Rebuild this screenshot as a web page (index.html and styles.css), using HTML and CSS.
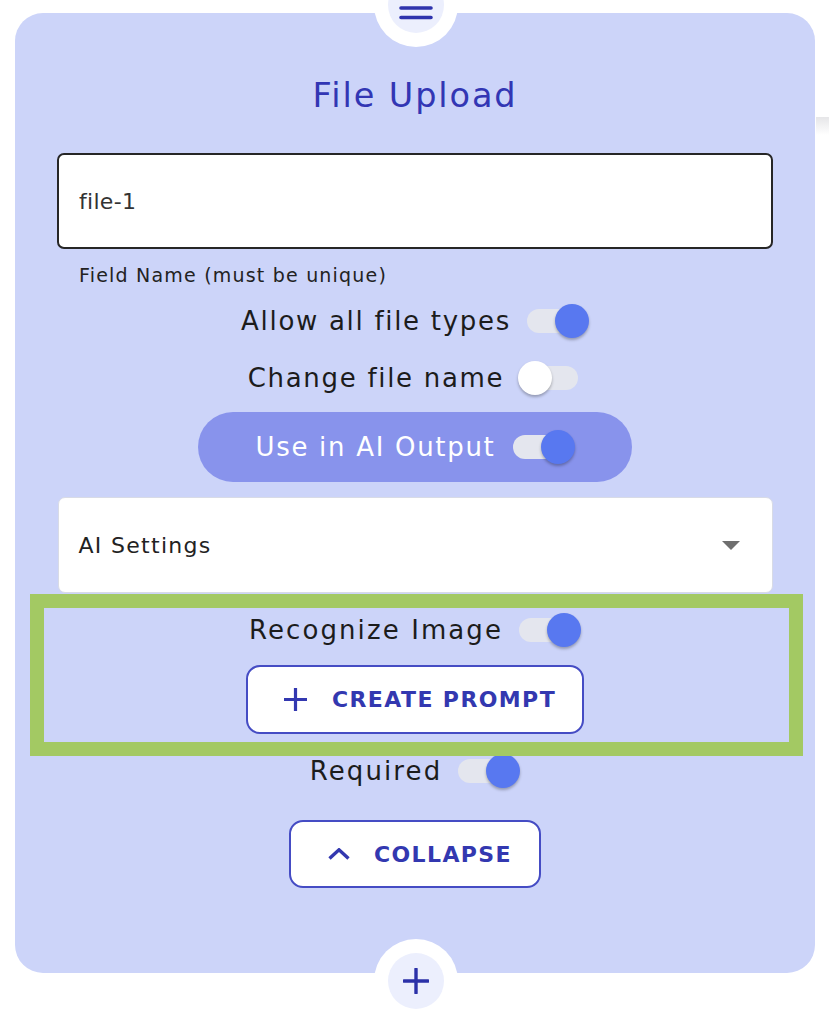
FILE: index.html
```html
<!DOCTYPE html>
<html lang="en">
<head>
<meta charset="utf-8">
<title>File Upload</title>
<link rel="stylesheet" href="styles.css">
</head>
<body>
<div class="page">
  <div class="side-shadow"></div>
  <section class="card">
    <h1 class="title">File Upload</h1>
    <div class="field"><span class="field-value">file-1</span></div>
    <p class="helper">Field Name (must be unique)</p>

    <div class="toggle-row row-allow">
      <span class="label">Allow all file types</span>
      <span class="switch on"><span class="track"></span><span class="knob"></span></span>
    </div>
    <div class="toggle-row row-change">
      <span class="label">Change file name</span>
      <span class="switch off"><span class="track"></span><span class="knob"></span></span>
    </div>

    <div class="pill">
      <span class="label">Use in AI Output</span>
      <span class="switch on"><span class="track"></span><span class="knob"></span></span>
    </div>

    <div class="select">
      <span class="select-value">AI Settings</span>
      <svg class="select-arrow" width="18" height="9" viewBox="0 0 18 9"><path d="M0 0 L18 0 L9 9 Z" fill="#6f6f6f"/></svg>
    </div>

    <div class="toggle-row row-recognize">
      <span class="label">Recognize Image</span>
      <span class="switch on"><span class="track"></span><span class="knob"></span></span>
    </div>

    <button class="btn btn-create" type="button">
      <svg class="btn-icon" width="25" height="25" viewBox="0 0 25 25"><path d="M12.5 1 V24 M1 12.5 H24" stroke="#3338b0" stroke-width="3.2" fill="none"/></svg>
      <span>CREATE PROMPT</span>
    </button>

    <div class="toggle-row row-required">
      <span class="label">Required</span>
      <span class="switch on"><span class="track"></span><span class="knob"></span></span>
    </div>

    <button class="btn btn-collapse" type="button">
      <svg class="btn-icon" width="22" height="12" viewBox="0 0 22 12"><path d="M1.5 10.5 L11 1.8 L20.5 10.5" stroke="#3338b0" stroke-width="3.4" fill="none" stroke-linejoin="miter"/></svg>
      <span>COLLAPSE</span>
    </button>
  </section>

  <div class="handle handle-top">
    <span class="handle-inner">
      <svg width="34" height="14" viewBox="0 0 34 14"><path d="M2 2 H32 M2 11.5 H32" stroke="#2e33ad" stroke-width="3.6" stroke-linecap="round"/></svg>
    </span>
  </div>
  <div class="handle handle-bottom">
    <span class="handle-inner">
      <svg width="26" height="26" viewBox="0 0 26 26"><path d="M13 1 V25 M1 13 H25" stroke="#2b31a8" stroke-width="3.4" stroke-linecap="round"/></svg>
    </span>
  </div>
  <div class="highlight"></div>
</div>
</body>
</html>
```

FILE: styles.css
```css
* { box-sizing: border-box; }

html, body {
  margin: 0;
  padding: 0;
  background: #ffffff;
}

body {
  font-family: "DejaVu Sans", "Noto Sans", sans-serif;
  color: #1c1c1c;
}

.page {
  position: relative;
  width: 829px;
  height: 1024px;
  overflow: hidden;
}

.side-shadow {
  position: absolute;
  left: 816px;
  top: 117px;
  width: 40px;
  height: 18px;
  background: linear-gradient(to bottom, #e6e6e8 0%, #ffffff 100%);
}

.card {
  margin: 13px 0 0 15px;
  width: 800px;
  height: 960px;
  background: #ccd4f9;
  border-radius: 28px;
  display: flex;
  flex-direction: column;
  align-items: center;
  padding-top: 63px;
}

.title {
  margin: 0;
  height: 40px;
  line-height: 40px;
  font-size: 33.5px;
  font-weight: 500;
  letter-spacing: 1.9px;
  color: #3236b4;
}

.field {
  margin-top: 37px;
  width: 716px;
  height: 96px;
  background: #ffffff;
  border: 2px solid #262626;
  border-radius: 7px;
  display: flex;
  align-items: center;
  padding-left: 20px;
}

.field-value {
  font-size: 22px;
  letter-spacing: 0.3px;
  color: #333333;
}

.helper {
  margin: 14px 0 0 0;
  width: 716px;
  padding-left: 22px;
  height: 24px;
  line-height: 24px;
  font-size: 19px;
  letter-spacing: 1.2px;
  color: #222222;
}

.toggle-row {
  height: 36px;
  display: flex;
  align-items: center;
  gap: 14px;
}

.label {
  font-size: 26px;
  letter-spacing: 1.7px;
  line-height: 36px;
  color: #1c1c1c;
}

.row-allow { margin-top: 16px; }
.row-change { margin-top: 21px; }
.row-recognize { margin-top: 19px; }
.row-required { margin-top: 19px; }

.row-recognize .label,
.row-required .label {
  letter-spacing: 2.1px;
}

.switch {
  position: relative;
  width: 64px;
  height: 36px;
  flex: none;
}

.switch .track {
  position: absolute;
  left: 2px;
  top: 6px;
  width: 58px;
  height: 24px;
  border-radius: 12px;
  background: #e4e6ee;
}

.switch .knob {
  position: absolute;
  top: 1px;
  width: 34px;
  height: 34px;
  border-radius: 50%;
  box-shadow: 0 2px 3px rgba(0, 0, 0, 0.28);
}

.switch.on .knob {
  left: 30px;
  background: #5878f0;
}

.switch.off .knob {
  left: 0;
  background: #ffffff;
}

.pill {
  margin-top: 16px;
  height: 70px;
  padding: 0 57px;
  border-radius: 35px;
  background: #8893ec;
  display: flex;
  align-items: center;
  gap: 15px;
}

.pill .label {
  color: #ffffff;
}

.select {
  margin-top: 15px;
  width: 715px;
  height: 96px;
  background: #ffffff;
  border: 1px solid #d8dbe6;
  border-radius: 7px;
  display: flex;
  align-items: center;
  justify-content: space-between;
  padding: 0 32px 0 20px;
}

.select-value {
  font-size: 22px;
  letter-spacing: 1.3px;
  color: #222222;
}

.btn {
  display: flex;
  align-items: center;
  background: #ffffff;
  border: 2px solid #454cc4;
  border-radius: 14px;
  font-family: "DejaVu Sans", "Noto Sans", sans-serif;
  font-weight: 700;
  font-size: 22px;
  letter-spacing: 1.4px;
  color: #3338b0;
  cursor: pointer;
}

.btn-create {
  margin-top: 17px;
  height: 69px;
  padding: 0 26px 0 35px;
  gap: 24px;
}

.btn-collapse {
  margin-top: 31px;
  height: 68px;
  padding: 0 27px 0 37px;
  gap: 24px;
}

.btn-icon {
  flex: none;
}

.handle {
  position: absolute;
  left: 374px;
  width: 84px;
  height: 84px;
  border-radius: 50%;
  background: #ffffff;
  display: flex;
  align-items: center;
  justify-content: center;
}

.handle-top { top: -37px; }
.handle-bottom { top: 939px; }

.handle-inner {
  width: 56px;
  height: 56px;
  border-radius: 50%;
  background: #eceffd;
  display: flex;
  align-items: center;
  justify-content: center;
}

.handle-top .handle-inner {
  align-items: flex-end;
  padding-bottom: 13px;
}

.highlight {
  position: absolute;
  left: 30px;
  top: 594px;
  width: 773px;
  height: 162px;
  border: 14px solid #a3c963;
}
```
